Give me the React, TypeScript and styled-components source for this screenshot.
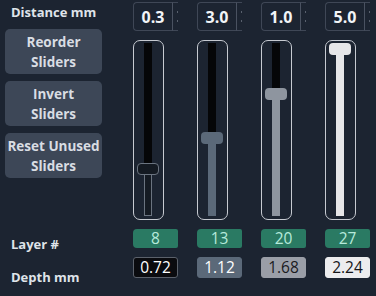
import React from "react";
import styled, { createGlobalStyle } from "styled-components";

const GlobalStyle = createGlobalStyle`
  html, body {
    margin: 0;
    padding: 0;
    background: #1c2431;
  }
  body {
    font-family: "Open Sans", "Noto Sans", sans-serif;
    width: 376px;
    height: 296px;
    overflow: hidden;
  }
`;

const Page = styled.div`
  display: flex;
  align-items: flex-start;
  width: 376px;
  height: 296px;
  background: #1c2431;
  color: #dfe3e9;
`;

const Side = styled.div`
  display: flex;
  flex-direction: column;
  width: 128px;
  padding-left: 5px;
  box-sizing: border-box;
`;

const Label = styled.div<{ $top: number }>`
  font-size: 13px;
  font-weight: 700;
  line-height: 18px;
  padding-left: 6px;
  margin-top: ${(p) => p.$top}px;
`;

const Buttons = styled.div`
  display: flex;
  flex-direction: column;
  gap: 7px;
  margin-top: 8px;
`;

const SideButton = styled.button`
  width: 97px;
  height: 45px;
  border: none;
  border-radius: 5px;
  background: #3d4757;
  color: #d9dde3;
  font-family: "Open Sans", "Noto Sans", sans-serif;
  font-size: 13.5px;
  font-weight: 700;
  line-height: 20px;
  padding: 1px 0 0;
  text-align: center;
`;

const Columns = styled.div`
  display: flex;
  gap: 19px;
  padding-left: 5px;
  padding-top: 2px;
`;

const Column = styled.div`
  display: flex;
  flex-direction: column;
  width: 45px;
  gap: 9px;
`;

const Spin = styled.div`
  display: flex;
  height: 29px;
`;

const SpinField = styled.div`
  flex: 1;
  display: flex;
  align-items: center;
  justify-content: center;
  border: 1px solid #3f4756;
  border-right: none;
  border-radius: 4px 0 0 4px;
  color: #f2f4f7;
  font-size: 16px;
  font-weight: 700;
`;

const SpinArrows = styled.div`
  width: 5px;
  border-left: 1px solid #4a5261;
  border-top: 1px solid #3f4756;
  border-bottom: 1px solid #3f4756;
  display: flex;
  flex-direction: column;
  justify-content: space-evenly;
  align-items: flex-end;
`;

const Dot = styled.span`
  width: 1px;
  height: 2px;
  background: #59616e;
`;

const SliderFrame = styled.div`
  position: relative;
  width: 31px;
  height: 180px;
  border: 1px solid #c6cad1;
  border-radius: 7px;
  box-sizing: border-box;
`;

const Groove = styled.div`
  position: absolute;
  left: 10px;
  top: 2px;
  width: 8px;
  bottom: 3px;
  background: #050608;
`;

const Fill = styled.div<{ $color: string; $outline: boolean }>`
  position: absolute;
  left: 10px;
  width: 8px;
  bottom: 3px;
  box-sizing: border-box;
  background: ${(p) => p.$color};
  border: ${(p) => (p.$outline ? "1px solid #6b7480" : "none")};
`;

const Thumb = styled.div<{ $color: string; $outline: boolean }>`
  position: absolute;
  left: 3px;
  width: 22px;
  height: 12px;
  box-sizing: border-box;
  border-radius: 4px;
  background: ${(p) => p.$color};
  border: ${(p) => (p.$outline ? "1px solid #6b7480" : "none")};
`;

const LayerBox = styled.div`
  height: 19px;
  border-radius: 4px 2px 2px 4px;
  background: #2a7a63;
  color: #b6eadb;
  font-size: 15.5px;
  line-height: 19px;
  text-align: center;
`;

const DepthBox = styled.div<{ $bg: string; $fg: string; $border: string }>`
  height: 21px;
  box-sizing: border-box;
  border-radius: 3px;
  border: 1px solid ${(p) => p.$border};
  background: ${(p) => p.$bg};
  color: ${(p) => p.$fg};
  font-size: 15.5px;
  line-height: 19px;
  text-align: center;
`;

const columns = [
  { value: "0.3", thumb: 122, thumbColor: "#141a22", fill: "#151b23", outline: true, layer: 8, depth: "0.72", bg: "#0a0b0f", fg: "#ffffff", border: "#5b616b" },
  { value: "3.0", thumb: 91, thumbColor: "#5b6979", fill: "#5b6979", outline: false, layer: 13, depth: "1.12", bg: "#5b6979", fg: "#ffffff", border: "#5b6979" },
  { value: "1.0", thumb: 47, thumbColor: "#8e959f", fill: "#8e959f", outline: false, layer: 20, depth: "1.68", bg: "#9a9ea7", fg: "#1b1b1f", border: "#9a9ea7" },
  { value: "5.0", thumb: 2, thumbColor: "#e6e6e8", fill: "#e6e6e8", outline: false, layer: 27, depth: "2.24", bg: "#ececee", fg: "#151518", border: "#ececee" },
];

const App = () => {
  return (
    <Page>
      <GlobalStyle />
      <Side>
        <Label $top={3}>Distance mm</Label>
        <Buttons>
          <SideButton>Reorder<br />Sliders</SideButton>
          <SideButton>Invert<br />Sliders</SideButton>
          <SideButton>Reset Unused<br />Sliders</SideButton>
        </Buttons>
        <Label $top={57}>Layer #</Label>
        <Label $top={15}>Depth mm</Label>
      </Side>
      <Columns>
        {columns.map((c) => (
          <Column key={c.layer}>
            <Spin>
              <SpinField>{c.value}</SpinField>
              <SpinArrows>
                <Dot />
                <Dot />
              </SpinArrows>
            </Spin>
            <SliderFrame>
              <Groove />
              <Fill $color={c.fill} $outline={c.outline} style={{ top: c.thumb + 6 }} />
              <Thumb $color={c.thumbColor} $outline={c.outline} style={{ top: c.thumb }} />
            </SliderFrame>
            <LayerBox>{c.layer}</LayerBox>
            <DepthBox $bg={c.bg} $fg={c.fg} $border={c.border}>{c.depth}</DepthBox>
          </Column>
        ))}
      </Columns>
    </Page>
  );
};

export default App;
